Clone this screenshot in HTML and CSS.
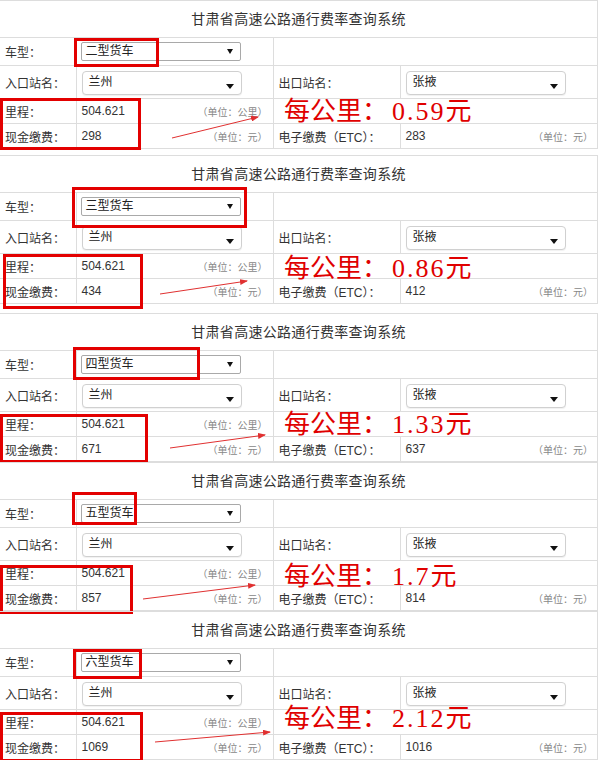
FILE: index.html
```html
<!DOCTYPE html>
<html lang="zh-CN">
<head>
    <meta charset="UTF-8">
    <meta name="viewport" content="width=device-width, initial-scale=1.0">
    <title>甘肃省高速公路通行费率查询系统</title>
    <link rel="stylesheet" href="styles.css">
</head>
<body>

    <!-- 二型货车 -->
    <section class="panel panel-1">
        <div class="title">甘肃省高速公路通行费率查询系统</div>
        <table class="grid">
            <colgroup><col class="c1"><col class="c2"><col class="c3"><col class="c4"></colgroup>
            <tr class="row-type">
                <td class="lbl">车型：</td>
                <td><div class="sel sel-type">二型货车<span class="caret-sm"></span></div></td>
                <td colspan="2"></td>
            </tr>
            <tr class="row-station">
                <td class="lbl">入口站名：</td>
                <td><div class="sel sel-station">兰州<span class="caret"></span></div></td>
                <td class="lbl">出口站名：</td>
                <td><div class="sel sel-station">张掖<span class="caret"></span></div></td>
            </tr>
            <tr class="row-dist">
                <td class="lbl">里程：</td>
                <td><div class="val">504.621<span class="unit">（单位：公里）</span></div></td>
                <td colspan="2"></td>
            </tr>
            <tr class="row-fee">
                <td class="lbl">现金缴费：</td>
                <td><div class="val">298<span class="unit">（单位：元）</span></div></td>
                <td class="lbl">电子缴费（ETC）：</td>
                <td><div class="val">283<span class="unit">（单位：元）</span></div></td>
            </tr>
        </table>
        <svg class="marks" width="600" height="149">
            <defs><marker id="ah1" markerWidth="8" markerHeight="6" refX="7" refY="3" orient="auto"><path d="M0,0 L8,3 L0,6 Z" fill="#e03030"/></marker></defs>
            <rect x="75.5" y="38.5" width="82" height="26"/>
            <rect x="1.5" y="98.5" width="138" height="49"/>
            <line x1="172" y1="137" x2="258" y2="116" marker-end="url(#ah1)"/>
        </svg>
        <div class="rate">每公里：<span class="num">0.59</span>元</div>
    </section>

    <!-- 三型货车 -->
    <section class="panel panel-2">
        <div class="title">甘肃省高速公路通行费率查询系统</div>
        <table class="grid">
            <colgroup><col class="c1"><col class="c2"><col class="c3"><col class="c4"></colgroup>
            <tr class="row-type">
                <td class="lbl">车型：</td>
                <td><div class="sel sel-type">三型货车<span class="caret-sm"></span></div></td>
                <td colspan="2"></td>
            </tr>
            <tr class="row-station">
                <td class="lbl">入口站名：</td>
                <td><div class="sel sel-station">兰州<span class="caret"></span></div></td>
                <td class="lbl">出口站名：</td>
                <td><div class="sel sel-station">张掖<span class="caret"></span></div></td>
            </tr>
            <tr class="row-dist">
                <td class="lbl">里程：</td>
                <td><div class="val">504.621<span class="unit">（单位：公里）</span></div></td>
                <td colspan="2"></td>
            </tr>
            <tr class="row-fee">
                <td class="lbl">现金缴费：</td>
                <td><div class="val">434<span class="unit">（单位：元）</span></div></td>
                <td class="lbl">电子缴费（ETC）：</td>
                <td><div class="val">412<span class="unit">（单位：元）</span></div></td>
            </tr>
        </table>
        <svg class="marks" width="600" height="149">
            <defs><marker id="ah2" markerWidth="8" markerHeight="6" refX="7" refY="3" orient="auto"><path d="M0,0 L8,3 L0,6 Z" fill="#e03030"/></marker></defs>
            <rect x="73.5" y="32.5" width="172" height="38"/>
            <rect x="4.5" y="99.5" width="137" height="52"/>
            <line x1="160" y1="138" x2="247" y2="125" marker-end="url(#ah2)"/>
        </svg>
        <div class="rate">每公里：<span class="num">0.86</span>元</div>
    </section>

    <!-- 四型货车 -->
    <section class="panel panel-3">
        <div class="title">甘肃省高速公路通行费率查询系统</div>
        <table class="grid">
            <colgroup><col class="c1"><col class="c2"><col class="c3"><col class="c4"></colgroup>
            <tr class="row-type">
                <td class="lbl">车型：</td>
                <td><div class="sel sel-type">四型货车<span class="caret-sm"></span></div></td>
                <td colspan="2"></td>
            </tr>
            <tr class="row-station">
                <td class="lbl">入口站名：</td>
                <td><div class="sel sel-station">兰州<span class="caret"></span></div></td>
                <td class="lbl">出口站名：</td>
                <td><div class="sel sel-station">张掖<span class="caret"></span></div></td>
            </tr>
            <tr class="row-dist">
                <td class="lbl">里程：</td>
                <td><div class="val">504.621<span class="unit">（单位：公里）</span></div></td>
                <td colspan="2"></td>
            </tr>
            <tr class="row-fee">
                <td class="lbl">现金缴费：</td>
                <td><div class="val">671<span class="unit">（单位：元）</span></div></td>
                <td class="lbl">电子缴费（ETC）：</td>
                <td><div class="val">637<span class="unit">（单位：元）</span></div></td>
            </tr>
        </table>
        <svg class="marks" width="600" height="149">
            <defs><marker id="ah3" markerWidth="8" markerHeight="6" refX="7" refY="3" orient="auto"><path d="M0,0 L8,3 L0,6 Z" fill="#e03030"/></marker></defs>
            <rect x="74.5" y="34.5" width="124" height="30"/>
            <rect x="1.5" y="101.5" width="145" height="46"/>
            <line x1="170" y1="134" x2="265" y2="121" marker-end="url(#ah3)"/>
        </svg>
        <div class="rate">每公里：<span class="num">1.33</span>元</div>
    </section>

    <!-- 五型货车 -->
    <section class="panel panel-4">
        <div class="title">甘肃省高速公路通行费率查询系统</div>
        <table class="grid">
            <colgroup><col class="c1"><col class="c2"><col class="c3"><col class="c4"></colgroup>
            <tr class="row-type">
                <td class="lbl">车型：</td>
                <td><div class="sel sel-type">五型货车<span class="caret-sm"></span></div></td>
                <td colspan="2"></td>
            </tr>
            <tr class="row-station">
                <td class="lbl">入口站名：</td>
                <td><div class="sel sel-station">兰州<span class="caret"></span></div></td>
                <td class="lbl">出口站名：</td>
                <td><div class="sel sel-station">张掖<span class="caret"></span></div></td>
            </tr>
            <tr class="row-dist">
                <td class="lbl">里程：</td>
                <td><div class="val">504.621<span class="unit">（单位：公里）</span></div></td>
                <td colspan="2"></td>
            </tr>
            <tr class="row-fee">
                <td class="lbl">现金缴费：</td>
                <td><div class="val">857<span class="unit">（单位：元）</span></div></td>
                <td class="lbl">电子缴费（ETC）：</td>
                <td><div class="val">814<span class="unit">（单位：元）</span></div></td>
            </tr>
        </table>
        <svg class="marks" width="600" height="149">
            <defs><marker id="ah4" markerWidth="8" markerHeight="6" refX="7" refY="3" orient="auto"><path d="M0,0 L8,3 L0,6 Z" fill="#e03030"/></marker></defs>
            <rect x="73.5" y="30.5" width="62" height="30"/>
            <rect x="1.5" y="103.5" width="130" height="46"/>
            <line x1="143" y1="136" x2="255" y2="122" marker-end="url(#ah4)"/>
        </svg>
        <div class="rate">每公里：<span class="num">1.7</span>元</div>
    </section>

    <!-- 六型货车 -->
    <section class="panel panel-5">
        <div class="title">甘肃省高速公路通行费率查询系统</div>
        <table class="grid">
            <colgroup><col class="c1"><col class="c2"><col class="c3"><col class="c4"></colgroup>
            <tr class="row-type">
                <td class="lbl">车型：</td>
                <td><div class="sel sel-type">六型货车<span class="caret-sm"></span></div></td>
                <td colspan="2"></td>
            </tr>
            <tr class="row-station">
                <td class="lbl">入口站名：</td>
                <td><div class="sel sel-station">兰州<span class="caret"></span></div></td>
                <td class="lbl">出口站名：</td>
                <td><div class="sel sel-station">张掖<span class="caret"></span></div></td>
            </tr>
            <tr class="row-dist">
                <td class="lbl">里程：</td>
                <td><div class="val">504.621<span class="unit">（单位：公里）</span></div></td>
                <td colspan="2"></td>
            </tr>
            <tr class="row-fee">
                <td class="lbl">现金缴费：</td>
                <td><div class="val">1069<span class="unit">（单位：元）</span></div></td>
                <td class="lbl">电子缴费（ETC）：</td>
                <td><div class="val">1016<span class="unit">（单位：元）</span></div></td>
            </tr>
        </table>
        <svg class="marks" width="600" height="149">
            <defs><marker id="ah5" markerWidth="8" markerHeight="6" refX="7" refY="3" orient="auto"><path d="M0,0 L8,3 L0,6 Z" fill="#e03030"/></marker></defs>
            <rect x="74.5" y="38.5" width="66" height="27"/>
            <rect x="1.5" y="101.5" width="140" height="47"/>
            <line x1="155" y1="130" x2="270" y2="120" marker-end="url(#ah5)"/>
        </svg>
        <div class="rate">每公里：<span class="num">2.12</span>元</div>
    </section>

</body>
</html>
```

FILE: styles.css
```css
* {
    margin: 0;
    padding: 0;
    box-sizing: border-box;
}

body {
    width: 600px;
    background: #fff;
    color: #333;
    font-family: "Liberation Sans", "Noto Sans CJK SC", sans-serif;
    font-size: 12px;
    overflow: hidden;
}

/* one screenshot of the query page */
.panel {
    position: relative;
    width: 598px;
    border-top: 1px solid #ddd;
    border-right: 1px solid #ddd;
}

.panel-1 { margin-bottom: 6px; }
.panel-2 { margin-bottom: 9px; }

.title {
    height: 36px;
    line-height: 36px;
    text-align: center;
    font-size: 14px;
    letter-spacing: 0.3px;
    color: #333;
}

/* form table */
.grid {
    width: 598px;
    table-layout: fixed;
    border-collapse: collapse;
}

.grid .c1 { width: 76px; }
.grid .c2 { width: 197px; }
.grid .c3 { width: 127px; }
.grid .c4 { width: 198px; }

.grid td {
    border-top: 1px solid #ddd;
    border-bottom: 1px solid #ddd;
    border-left: 1px solid #ddd;
    padding: 0 5px;
    vertical-align: middle;
    white-space: nowrap;
}

.grid td:first-child {
    border-left: none;
}

.row-type td { height: 28px; }
.row-station td { height: 33px; }
.row-dist td { height: 25px; }
.row-fee td { height: 25px; }

/* labels and units use centred full-width colons */
.lbl,
.unit {
    font-family: "Liberation Sans", "Noto Sans CJK TC", sans-serif;
}

.lbl {
    color: #333;
}

/* fake selects */
.sel {
    position: relative;
    width: 160px;
    background: #fff;
    color: #222;
}

.sel-type {
    height: 19px;
    line-height: 17px;
    padding-left: 4px;
    border: 1px solid #a9a9a9;
    border-radius: 2px;
    margin-left: -1px;
}

.caret-sm {
    position: absolute;
    right: 7px;
    top: 6px;
    border-left: 3px solid transparent;
    border-right: 3px solid transparent;
    border-top: 5px solid #111;
}

.sel-station {
    height: 24px;
    margin-top: 2px;
    padding: 3px 0 0 6px;
    line-height: 14px;
    border: 1px solid #d0d0d0;
    border-radius: 4px;
    box-shadow: 0 1px 1px rgba(0, 0, 0, 0.06);
}

.caret {
    position: absolute;
    right: 7px;
    bottom: 5px;
    border-left: 4px solid transparent;
    border-right: 4px solid transparent;
    border-top: 5px solid #111;
}

/* values with units */
.val {
    display: flex;
    justify-content: space-between;
    align-items: center;
}

.unit {
    font-size: 10px;
    color: #888;
}

/* red annotations on top */
.marks {
    position: absolute;
    left: 0;
    top: 0;
    overflow: visible;
    pointer-events: none;
}

.marks rect {
    fill: none;
    stroke: #e30000;
    stroke-width: 3;
}

.marks line {
    stroke: #e03030;
    stroke-width: 1;
}

.rate {
    position: absolute;
    left: 284px;
    top: 99px;
    font-family: "Liberation Serif", "Noto Sans CJK SC", serif;
    font-size: 26px;
    line-height: 24px;
    color: #e00000;
    white-space: nowrap;
}

.rate .num {
    margin-left: 4px;
    letter-spacing: 2px;
}

.panel-2 .rate { top: 101px; }
.panel-3 .rate { top: 99px; }
.panel-4 .rate { top: 102px; }
.panel-5 .rate { top: 95px; }
```
